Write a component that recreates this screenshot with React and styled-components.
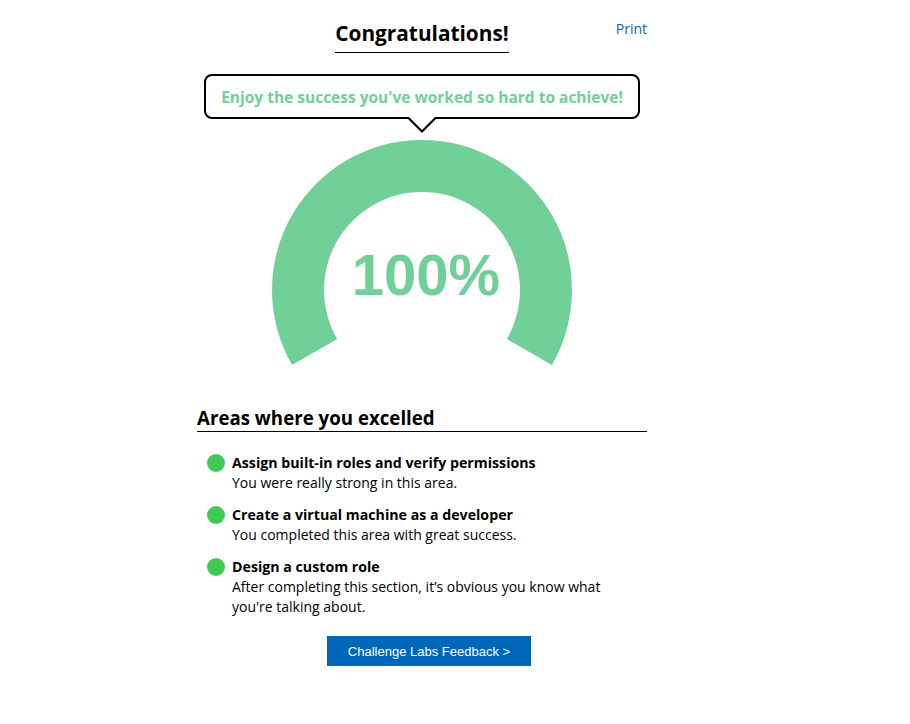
import styled, { createGlobalStyle } from "styled-components";

const GlobalStyle = createGlobalStyle`
  body {
    margin: 0;
    background: #fff;
    font-family: "Segoe UI", "Open Sans", "Liberation Sans", sans-serif;
    color: #000;
  }
`;

const GREEN = "#71cf98";

const Page = styled.div`
  width: 450px;
  margin-left: 197px;
  padding-top: 18px;
`;

const Header = styled.div`
  display: grid;
  grid-template-columns: 1fr auto 1fr;
  align-items: start;
`;

const Title = styled.h1`
  grid-column: 2;
  margin: 0;
  font-size: 20.8px;
  font-weight: 700;
  line-height: 30px;
  padding-bottom: 4px;
  border-bottom: 1px solid #000;
`;

const PrintLink = styled.a`
  grid-column: 3;
  justify-self: end;
  margin-top: 1px;
  font-size: 14px;
  color: #0067b8;
  text-decoration: none;
  cursor: pointer;
`;

const Bubble = styled.div`
  position: relative;
  margin: 21px 7px 0;
  height: 41px;
  border: 2px solid #000;
  border-radius: 8px;
  display: flex;
  align-items: center;
  justify-content: center;
  color: ${GREEN};
  font-size: 15.5px;
  font-weight: 700;

  &::before,
  &::after {
    content: "";
    position: absolute;
    left: 50%;
    transform: translateX(-50%);
    border-style: solid;
    border-color: transparent;
  }

  &::before {
    top: 100%;
    border-width: 16px 16px 0;
    border-top-color: #000;
  }

  &::after {
    top: calc(100% - 1px);
    border-width: 14px 14px 0;
    border-top-color: #fff;
  }
`;

const GaugeWrap = styled.div`
  display: flex;
  justify-content: center;
  margin-top: 21px;
`;

const SectionTitle = styled.h2`
  margin: 39px 0 0;
  font-size: 18.7px;
  font-weight: 700;
  line-height: 26px;
  border-bottom: 1px solid #000;
`;

const List = styled.ul`
  list-style: none;
  margin: 21px 0 0;
  padding: 0 0 0 10px;
  display: flex;
  flex-direction: column;
  gap: 12px;
`;

const Item = styled.li`
  display: flex;
  gap: 7px;
  align-items: flex-start;
`;

const Dot = styled.span`
  flex: none;
  width: 18px;
  height: 18px;
  margin-top: 1px;
  border-radius: 50%;
  background: #3dca55;
`;

const ItemBody = styled.div`
  font-size: 14px;
  line-height: 20px;
  max-width: 400px;
`;

const ItemTitle = styled.div`
  font-weight: 700;
  font-size: 14.2px;
`;

const ButtonRow = styled.div`
  display: flex;
  justify-content: center;
  padding-left: 14px;
  margin-top: 19px;
`;

const FeedbackButton = styled.button`
  width: 204px;
  height: 30px;
  border: none;
  background: #0067b8;
  color: #fff;
  font-family: "Liberation Sans", Arial, sans-serif;
  font-size: 13px;
  cursor: pointer;
`;

const GaugeText = styled.text`
  font-family: "Liberation Sans", Arial, sans-serif;
  font-weight: 700;
  font-size: 58px;
`;

function polar(cx, cy, r, deg) {
  const a = (deg * Math.PI) / 180;
  return [cx + r * Math.cos(a), cy - r * Math.sin(a)];
}

function Gauge({ percent }) {
  const cx = 150;
  const cy = 150;
  const outer = 150;
  const inner = 98;
  const start = 210;
  const sweep = (240 * percent) / 100;
  const end = start - sweep;
  const [ox1, oy1] = polar(cx, cy, outer, start);
  const [ox2, oy2] = polar(cx, cy, outer, end);
  const [ix2, iy2] = polar(cx, cy, inner, end);
  const [ix1, iy1] = polar(cx, cy, inner, start);
  const large = sweep > 180 ? 1 : 0;
  const d = `M${ox1} ${oy1} A${outer} ${outer} 0 ${large} 1 ${ox2} ${oy2} L${ix2} ${iy2} A${inner} ${inner} 0 ${large} 0 ${ix1} ${iy1} Z`;

  return (
    <svg width="300" height="226" viewBox="0 0 300 226">
      <path d={d} fill={GREEN} />
      <GaugeText x="154" y="155" textAnchor="middle" fill={GREEN}>
        {percent}%
      </GaugeText>
    </svg>
  );
}

const areas = [
  {
    title: "Assign built-in roles and verify permissions",
    text: "You were really strong in this area.",
  },
  {
    title: "Create a virtual machine as a developer",
    text: "You completed this area with great success.",
  },
  {
    title: "Design a custom role",
    text: "After completing this section, it\u2019s obvious you know what you're talking about.",
  },
];

function App() {
  return (
    <>
      <GlobalStyle />
      <Page>
        <Header>
          <Title>Congratulations!</Title>
          <PrintLink>Print</PrintLink>
        </Header>
        <Bubble>Enjoy the success you've worked so hard to achieve!</Bubble>
        <GaugeWrap>
          <Gauge percent={100} />
        </GaugeWrap>
        <SectionTitle>Areas where you excelled</SectionTitle>
        <List>
          {areas.map((area) => (
            <Item key={area.title}>
              <Dot />
              <ItemBody>
                <ItemTitle>{area.title}</ItemTitle>
                <div>{area.text}</div>
              </ItemBody>
            </Item>
          ))}
        </List>
        <ButtonRow>
          <FeedbackButton>Challenge Labs Feedback &gt;</FeedbackButton>
        </ButtonRow>
      </Page>
    </>
  );
}

export default App;
